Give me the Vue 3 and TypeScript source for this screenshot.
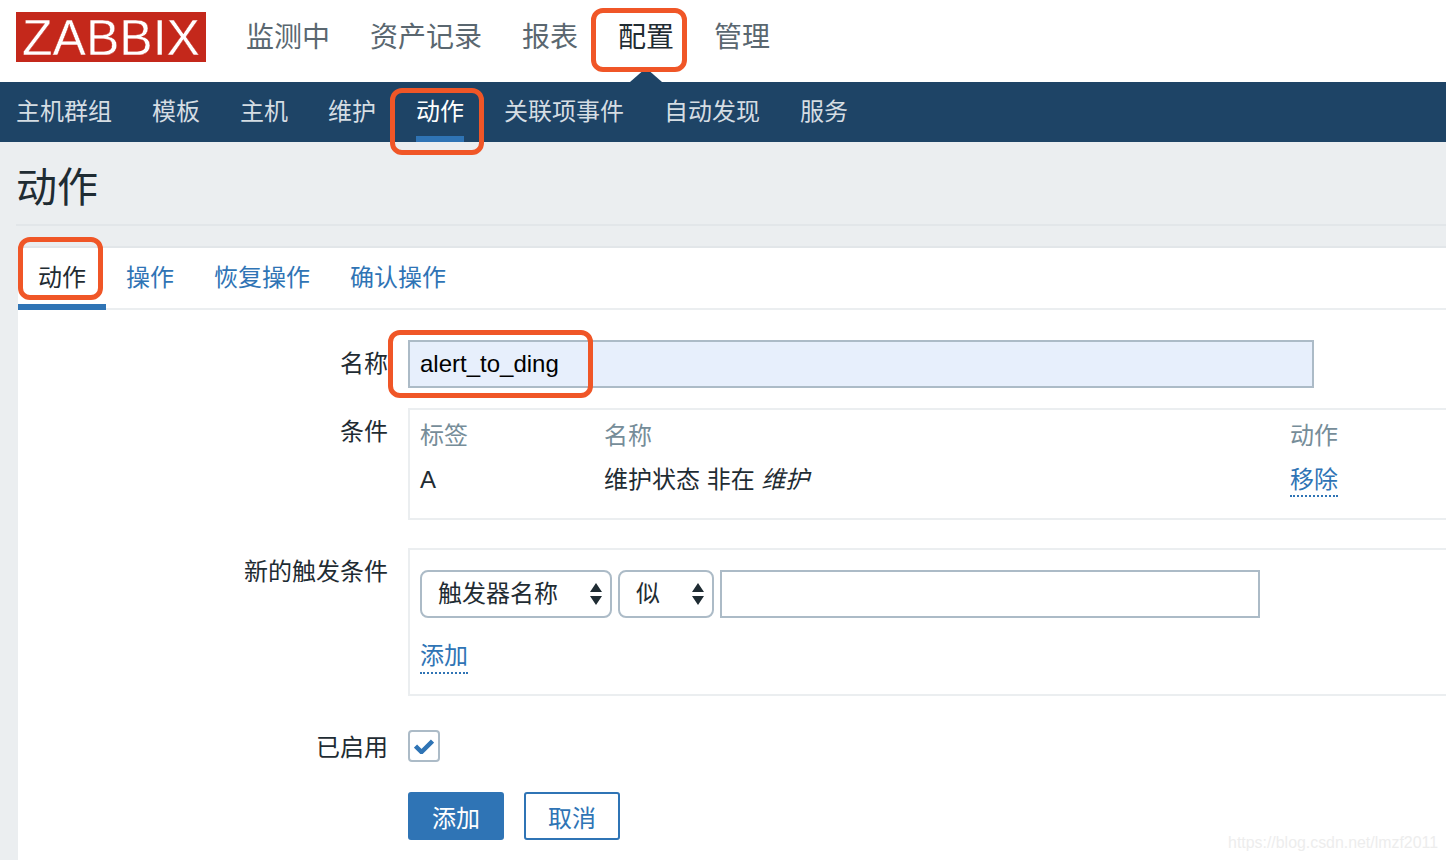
<script setup lang="ts">
const topItems = ['监测中', '资产记录', '报表', '配置', '管理']
const subItems = ['主机群组', '模板', '主机', '维护', '动作', '关联项事件', '自动发现', '服务']
const tabs = ['动作', '操作', '恢复操作', '确认操作']
</script>

<template>
  <div class="page">
    <header class="top">
      <div class="logo">ZABBIX</div>
      <nav class="top-nav">
        <a v-for="t in topItems" :key="t" :class="{ on: t === '配置' }">{{ t }}</a>
      </nav>
      <span class="caret"></span>
    </header>
    <nav class="sub">
      <a v-for="s in subItems" :key="s" :class="{ on: s === '动作' }">{{ s }}</a>
    </nav>
    <h1 class="title">动作</h1>
    <section class="panel">
      <div class="tabs">
        <a v-for="t in tabs" :key="t" :class="{ on: t === '动作' }">{{ t }}</a>
      </div>
      <form class="form" @submit.prevent>
        <label class="lab lab-name">名称</label>
        <div class="name-input">alert_to_ding</div>

        <label class="lab lab-cond">条件</label>
        <div class="box cond">
          <div class="cond-row head"><span>标签</span><span>名称</span><span>动作</span></div>
          <div class="cond-row"><span class="latin">A</span><span>维护状态 非在 <i>维护</i></span><span><a class="dotted">移除</a></span></div>
        </div>

        <label class="lab lab-new">新的触发条件</label>
        <div class="box trig">
          <div class="trig-row">
            <div class="sel sel-a">触发器名称<svg class="updown" viewBox="0 0 12 22"><path d="M6 0 12 9H0zM6 22 0 13h12z"/></svg></div>
            <div class="sel sel-b">似<svg class="updown" viewBox="0 0 12 22"><path d="M6 0 12 9H0zM6 22 0 13h12z"/></svg></div>
            <div class="txt"></div>
          </div>
          <a class="dotted add">添加</a>
        </div>

        <label class="lab lab-on">已启用</label>
        <div class="check">
          <svg viewBox="0 0 20 16" width="20" height="16"><path d="M1.5 8 7.5 14 18.5 3" fill="none" stroke="#2f74b5" stroke-width="4.5"/></svg>
        </div>

        <span></span>
        <div class="btns">
          <button class="btn primary" type="button">添加</button>
          <button class="btn ghost" type="button">取消</button>
        </div>
      </form>
    </section>
    <div class="mark m1"></div>
    <div class="mark m2"></div>
    <div class="mark m3"></div>
    <div class="mark m4"></div>
    <div class="wm">https://blog.csdn.net/lmzf2011</div>
  </div>
</template>

<style>
html, body { margin: 0; background: #ebeef0; overflow: hidden; }
</style>

<style scoped>
.page {
  position: relative;
  width: 1446px;
  height: 860px;
  overflow: hidden;
  background: #ebeef0;
  font-family: "Liberation Sans", "Noto Sans CJK SC", sans-serif;
  color: #1f2c33;
  font-size: 24px;
}
.top {
  position: relative;
  height: 82px;
  box-sizing: border-box;
  background: #fff;
  display: flex;
  align-items: flex-start;
  padding: 12px 0 0 16px;
}
.logo {
  width: 190px;
  height: 50px;
  background: #c4281b;
  color: #fff;
  font-size: 50px;
  line-height: 52px;
  text-align: center;
  -webkit-text-stroke: 0.4px #c4281b;
}
.top-nav { display: flex; gap: 40px; margin-left: 40px; font-size: 28px; line-height: 52px; color: #5a6770; }
.top-nav a.on { color: #1f2c33; }
.caret {
  position: absolute;
  left: 630px;
  bottom: 0;
  border-left: 16px solid transparent;
  border-right: 16px solid transparent;
  border-bottom: 14px solid #1e4466;
}
.sub {
  height: 60px;
  background: #1e4466;
  display: flex;
  gap: 40px;
  padding-left: 16px;
  color: #d5dde3;
  line-height: 60px;
}
.sub a { position: relative; height: 60px; }
.sub a.on { color: #fff; }
.sub a.on::after {
  content: "";
  position: absolute;
  left: 0;
  right: 0;
  bottom: 0;
  height: 6px;
  background: #2f74b5;
}
.title {
  margin: 0 0 20px 16px;
  height: 84px;
  box-sizing: border-box;
  border-bottom: 2px solid #e2e6e9;
  font-size: 41px;
  font-weight: 400;
  line-height: 92px;
  color: #1f2c33;
}
.panel {
  margin-left: 18px;
  height: 614px;
  background: #fff;
  border-top: 2px solid #e2e6e9;
  box-sizing: border-box;
}
.tabs {
  height: 62px;
  box-sizing: border-box;
  border-bottom: 2px solid #ebeef0;
  display: flex;
  color: #2f74b5;
  line-height: 60px;
}
.tabs a { padding: 0 20px; height: 62px; box-sizing: border-box; }
.tabs a.on { color: #1f2c33; border-bottom: 6px solid #2f74b5; }
.form {
  display: grid;
  grid-template-columns: 370px 1fr;
  column-gap: 20px;
  padding-top: 30px;
  align-items: start;
}
.lab { text-align: right; line-height: 48px; color: #1f2c33; }
.lab-cond { line-height: 48px; margin-top: 20px; }
.lab-new { line-height: 48px; margin-top: 28px; }
.lab-on { line-height: 32px; margin-top: 36px; margin-bottom: -2px; }
.name-input {
  width: 906px;
  height: 48px;
  box-sizing: border-box;
  background: #e7effc;
  border: 2px solid #acbbc7;
  padding: 0 10px;
  line-height: 44px;
  color: #000;
}
.box {
  box-sizing: border-box;
  border: 2px solid #ebeef0;
  border-right: 0;
  background: #fff;
  width: 1040px;
}
.cond { margin-top: 20px; height: 112px; padding: 4px 10px 0; }
.cond-row {
  display: grid;
  grid-template-columns: 184px 686px 100px;
  line-height: 44px;
  height: 44px;
}
.cond-row.head { color: #768d99; }
.latin { font-size: 24px; }
.dotted {
  color: #2f74b5;
  display: inline-block;
  line-height: 30px;
  border-bottom: 2px dotted #2f74b5;
}
.trig { margin-top: 28px; height: 148px; padding: 20px 10px 0; }
.trig-row { display: flex; gap: 6px; }
.sel {
  position: relative;
  box-sizing: border-box;
  height: 48px;
  border: 2px solid #acbbc7;
  border-radius: 8px;
  padding-left: 16px;
  line-height: 44px;
}
.sel-a { width: 192px; }
.sel-b { width: 96px; }
.updown { position: absolute; right: 8px; top: 11px; width: 12px; height: 22px; fill: #1f2c33; }
.txt { width: 540px; height: 48px; box-sizing: border-box; border: 2px solid #acbbc7; }
.add { margin-top: 22px; line-height: 32px; }
.check {
  margin-top: 34px;
  width: 32px;
  height: 32px;
  box-sizing: border-box;
  border: 2px solid #acbbc7;
  border-radius: 4px;
  display: flex;
  align-items: center;
  justify-content: center;
}
.btns { display: flex; gap: 20px; margin-top: 30px; }
.btn {
  width: 96px;
  height: 48px;
  box-sizing: border-box;
  border-radius: 3px;
  border: 2px solid #2f74b5;
  font: inherit;
  padding: 0;
}
.primary { background: #2f74b5; color: #fff; }
.ghost { background: #fff; color: #2f74b5; }
.mark {
  position: absolute;
  box-sizing: border-box;
  border: 5px solid #f05627;
  border-radius: 12px;
}
.m1 { left: 591px; top: 8px; width: 96px; height: 64px; }
.m2 { left: 390px; top: 88px; width: 94px; height: 67px; }
.m3 { left: 18px; top: 237px; width: 85px; height: 63px; }
.m4 { left: 388px; top: 330px; width: 205px; height: 68px; }
.wm {
  position: absolute;
  right: 8px;
  bottom: 8px;
  font-size: 15.9px;
  color: #ededed;
}
</style>
